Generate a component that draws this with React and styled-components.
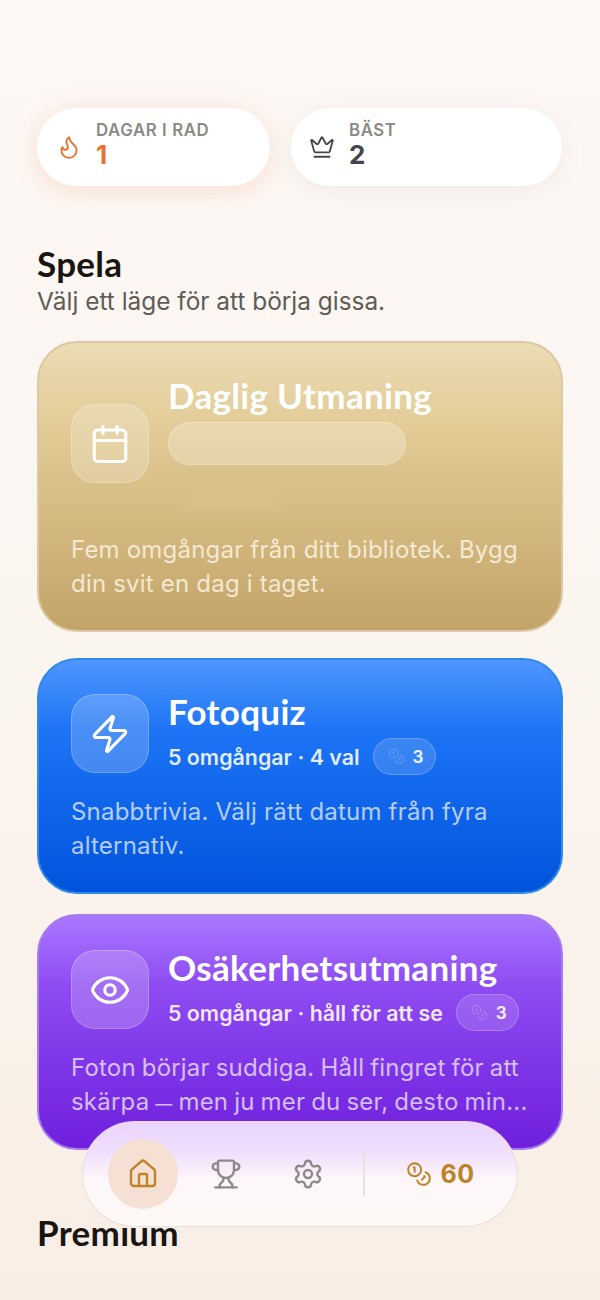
import React from 'react';
import styled, { createGlobalStyle } from 'styled-components';
import { Flame, Crown, Calendar, Zap, Eye, House, Trophy, Settings, Coins } from 'lucide-react';

const GlobalStyle = createGlobalStyle`
  html, body {
    margin: 0;
    padding: 0;
    background: #fbf3ed;
  }
`;

const Screen = styled.div`
  position: relative;
  width: 600px;
  height: 1300px;
  box-sizing: border-box;
  padding: 108px 37px 0;
  overflow: hidden;
  background: linear-gradient(180deg, #fdf8f5 0%, #fbf5f0 50%, #f9eee5 100%);
  font-family: 'Inter', 'Open Sans', sans-serif;
`;

const StatRow = styled.div`
  display: flex;
  gap: 21px;
`;

const StatPill = styled.div`
  flex: none;
  width: ${(p) => p.$width}px;
  height: 78px;
  display: flex;
  align-items: center;
  gap: 14px;
  box-sizing: border-box;
  padding-left: ${(p) => p.$pad}px;
  background: #fff;
  border-radius: 39px;
  box-shadow: ${(p) => p.$shadow};
  color: ${(p) => p.$color};
`;

const StatText = styled.div`
  display: flex;
  flex-direction: column;
  padding-bottom: 2px;
`;

const StatLabel = styled.span`
  font-size: 16.8px;
  line-height: 18px;
  font-weight: 600;
  letter-spacing: 0.6px;
  color: #8b8985;
`;

const StatValue = styled.span`
  font-size: 26px;
  line-height: 32px;
  font-weight: 700;
`;

const SectionTitle = styled.h2`
  margin: ${(p) => p.$top}px 0 0;
  font-family: 'Lato', sans-serif;
  font-size: 35px;
  line-height: 40px;
  font-weight: 700;
  letter-spacing: 0.3px;
  color: #191512;
`;

const Subtitle = styled.p`
  margin: 3px 0 0;
  font-size: 24.4px;
  line-height: 30px;
  color: #5f5b56;
`;

const Card = styled.section`
  box-sizing: border-box;
  height: ${(p) => p.$height}px;
  margin-top: ${(p) => p.$top}px;
  padding: ${(p) => p.$padTop}px 16px 0 32px;
  border-radius: 40px;
  border: 2px solid ${(p) => p.$edge};
  background: linear-gradient(180deg, ${(p) => p.$from} 0%, ${(p) => p.$mid} 30%, ${(p) => p.$to} 100%);
`;

const CardHead = styled.div`
  display: flex;
  align-items: center;
  gap: 19px;
`;

const IconTile = styled.div`
  flex: none;
  width: 78px;
  height: 79px;
  display: flex;
  align-items: center;
  justify-content: center;
  box-sizing: border-box;
  border-radius: 24px;
  border: 1.5px solid rgba(255, 255, 255, 0.22);
  background: rgba(255, 255, 255, 0.2);
  color: #fff;
`;

const HeadText = styled.div`
  display: flex;
  flex-direction: column;
  align-items: flex-start;
`;

const CardTitle = styled.h3`
  margin: 0;
  font-family: 'Lato', sans-serif;
  font-size: 35px;
  line-height: 38px;
  font-weight: 700;
  letter-spacing: 0.3px;
  color: #fff;
`;

const MetaRow = styled.div`
  display: flex;
  align-items: center;
  gap: 13px;
  margin-top: 8px;
`;

const Meta = styled.span`
  font-size: 21.4px;
  line-height: 36px;
  font-weight: 600;
  color: rgba(255, 255, 255, 0.88);
`;

const CostBadge = styled.span`
  display: flex;
  align-items: center;
  gap: 8px;
  box-sizing: border-box;
  width: 63px;
  height: 37px;
  padding-left: 14px;
  border-radius: 19px;
  border: 1.5px solid rgba(255, 255, 255, 0.22);
  background: rgba(255, 255, 255, 0.14);
  font-size: 17px;
  font-weight: 700;
  color: rgba(255, 255, 255, 0.88);
`;

const LoadingChip = styled.div`
  box-sizing: border-box;
  width: 238px;
  height: 43px;
  margin-top: 8px;
  border-radius: 22px;
  border: 1.5px solid rgba(255, 255, 255, 0.22);
  background: rgba(255, 255, 255, 0.24);
`;

const LoadingSmudge = styled.div`
  width: 100px;
  height: 16px;
  margin: 30px 0 0 16px;
  background: rgba(255, 255, 255, 0.05);
  filter: blur(4px);
`;

const Description = styled.p`
  margin: ${(p) => p.$top}px 0 0;
  font-size: 24px;
  line-height: 34px;
  letter-spacing: 0.2px;
  word-spacing: ${(p) => p.$wordGap || 0}px;
  color: ${(p) => p.$color};
`;

const Dash = styled.span`
  font-size: 17px;
`;

const BottomNav = styled.nav`
  position: absolute;
  left: 82px;
  top: 1121px;
  box-sizing: border-box;
  width: 436px;
  height: 106px;
  display: flex;
  align-items: center;
  padding-left: 25px;
  border-radius: 53px;
  border: 1.5px solid #e6e0da;
  border-top-color: #ecd8fc;
  background: linear-gradient(180deg, #ebd5fd 0%, #f1dffc 30%, #fdf7f9 56%, #fdf9f6 100%);
`;

const NavItem = styled.div`
  flex: none;
  width: ${(p) => p.$width}px;
  height: 70px;
  display: flex;
  align-items: center;
  justify-content: center;
  border-radius: 35px;
  background: ${(p) => (p.$active ? '#f5e0d3' : 'transparent')};
  color: ${(p) => (p.$active ? '#bd8427' : '#8e8a8c')};
`;

const NavDivider = styled.div`
  width: 1.5px;
  height: 44px;
  margin-left: 20px;
  background: #e8e2de;
`;

const Balance = styled.div`
  display: flex;
  align-items: center;
  gap: 9px;
  margin-left: 41px;
  font-size: 25px;
  font-weight: 700;
  letter-spacing: 0.5px;
  color: #bd8427;
`;

export default function App() {
  return (
    <Screen>
      <GlobalStyle />
      <StatRow>
        <StatPill
          $width={233}
          $pad={19}
          $color="#e8722c"
          $shadow="0 4px 26px rgba(240, 140, 90, 0.24)"
        >
          <Flame size={26} strokeWidth={1.7} />
          <StatText>
            <StatLabel>DAGAR I RAD</StatLabel>
            <StatValue>1</StatValue>
          </StatText>
        </StatPill>
        <StatPill
          $width={271}
          $pad={18}
          $color="#45454b"
          $shadow="0 4px 22px rgba(120, 110, 100, 0.09)"
        >
          <Crown size={26} strokeWidth={1.7} />
          <StatText>
            <StatLabel>BÄST</StatLabel>
            <StatValue>2</StatValue>
          </StatText>
        </StatPill>
      </StatRow>

      <SectionTitle $top={57}>Spela</SectionTitle>
      <Subtitle>Välj ett läge för att börja gissa.</Subtitle>

      <Card
        $height={291}
        $top={25}
        $padTop={33}
        $edge="#dcc8a4"
        $from="#ecdcb4"
        $mid="#e2cb96"
        $to="#c3a468"
      >
        <CardHead>
          <IconTile>
            <Calendar size={42} strokeWidth={1.8} />
          </IconTile>
          <HeadText>
            <CardTitle>Daglig Utmaning</CardTitle>
            <LoadingChip />
            <LoadingSmudge />
          </HeadText>
        </CardHead>
        <Description $top={22} $color="rgba(255, 250, 235, 0.78)">
          Fem omgångar från ditt bibliotek. Bygg din svit en dag i taget.
        </Description>
      </Card>

      <Card
        $height={236}
        $top={26}
        $padTop={32}
        $edge="#2f8ae8"
        $from="#4f96ff"
        $mid="#1d74f5"
        $to="#0054dc"
      >
        <CardHead>
          <IconTile>
            <Zap size={42} strokeWidth={1.8} />
          </IconTile>
          <HeadText>
            <CardTitle>Fotoquiz</CardTitle>
            <MetaRow>
              <Meta>5 omgångar · 4 val</Meta>
              <CostBadge>
                <Coins size={17} strokeWidth={1.6} opacity={0.2} />3
              </CostBadge>
            </MetaRow>
          </HeadText>
        </CardHead>
        <Description $top={20} $color="rgba(255, 255, 255, 0.7)">
          Snabbtrivia. Välj rätt datum från fyra alternativ.
        </Description>
      </Card>

      <Card
        $height={236}
        $top={20}
        $padTop={32}
        $edge="#a47cf0"
        $from="#a977ff"
        $mid="#8e4bf2"
        $to="#6f1fdc"
      >
        <CardHead>
          <IconTile>
            <Eye size={42} strokeWidth={1.8} />
          </IconTile>
          <HeadText>
            <CardTitle>Osäkerhetsutmaning</CardTitle>
            <MetaRow>
              <Meta>5 omgångar · håll för att se</Meta>
              <CostBadge>
                <Coins size={17} strokeWidth={1.6} opacity={0.2} />3
              </CostBadge>
            </MetaRow>
          </HeadText>
        </CardHead>
        <Description $top={20} $wordGap={-1} $color="rgba(255, 255, 255, 0.7)">
          Foton börjar suddiga. Håll fingret för att skärpa <Dash>—</Dash> men ju mer du ser, desto min...
        </Description>
      </Card>

      <SectionTitle $top={62}>Premium</SectionTitle>

      <BottomNav>
        <NavItem $width={70} $active>
          <House size={32} strokeWidth={1.8} />
        </NavItem>
        <NavItem $width={95}>
          <Trophy size={32} strokeWidth={1.8} />
        </NavItem>
        <NavItem $width={70}>
          <Settings size={32} strokeWidth={1.8} />
        </NavItem>
        <NavDivider />
        <Balance>
          <Coins size={26} strokeWidth={1.8} />
          60
        </Balance>
      </BottomNav>
    </Screen>
  );
}
